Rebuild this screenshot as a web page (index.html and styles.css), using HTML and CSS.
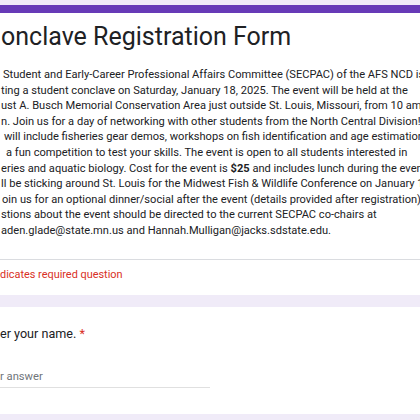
FILE: index.html
```html
<!DOCTYPE html>
<html lang="en">
<head>
<meta charset="utf-8">
<title>Conclave Registration Form</title>
<link rel="stylesheet" href="styles.css">
</head>
<body>
<div class="page">
  <div class="card header-card">
    <div class="band"></div>
    <h1 class="title">onclave Registration Form</h1>
    <div class="desc">
      <div class="line i3">Student and Early-Career Professional Affairs Committee (SECPAC) of the AFS NCD is</div>
      <div class="line">ting a student conclave on Saturday, January 18, 2025. The event will be held at the</div>
      <div class="line">ust A. Busch Memorial Conservation Area just outside St. Louis, Missouri, from 10 am</div>
      <div class="line">n. Join us for a day of networking with other students from the North Central Division!</div>
      <div class="line i4">will include fisheries gear demos, workshops on fish identification and age estimation,</div>
      <div class="line i6">a fun competition to test your skills. The event is open to all students interested in</div>
      <div class="line">eries and aquatic biology. Cost for the event is <b>$25</b> and includes lunch during the event.</div>
      <div class="line">ll be sticking around St. Louis for the Midwest Fish &amp; Wildlife Conference on January 19</div>
      <div class="line i2">oin us for an optional dinner/social after the event (details provided after registration).</div>
      <div class="line">stions about the event should be directed to the current SECPAC co-chairs at</div>
      <div class="line">aden.glade@state.mn.us and Hannah.Mulligan@jacks.sdstate.edu.</div>
    </div>
    <div class="required">dicates required question</div>
  </div>
  <div class="card question-card">
    <div class="question">er your name. <span class="star">*</span></div>
    <div class="answer">r answer</div>
  </div>
</div>
</body>
</html>
```
FILE: styles.css
```css
html, body {
  margin: 0;
  padding: 0;
}
body {
  background: #f0ebf8;
  font-family: Roboto, "Liberation Sans", Arial, sans-serif;
  color: #202124;
  overflow: hidden;
}
.page {
  padding-top: 5px;
  display: flex;
  flex-direction: column;
  gap: 12px;
}
.card {
  background: #ffffff;
  white-space: nowrap;
  overflow: hidden;
}
.band {
  height: 8px;
  background: #673ab7;
}
.title {
  margin: 0;
  padding: 9px 0 0 1px;
  font-size: 25px;
  line-height: 30px;
  font-weight: 400;
  color: #202124;
}
.desc {
  padding: 15px 0 20px 1px;
  border-bottom: 1px solid #dadce0;
  font-size: 11.1px;
  line-height: 15.6px;
  letter-spacing: 0;
}
.desc b {
  font-weight: 700;
}
.i2 { padding-left: 1px; }
.i3 { padding-left: 2px; }
.i4 { padding-left: 3px; }
.i6 { padding-left: 5px; }
.required {
  padding: 7px 0 12px 0;
  font-size: 10.9px;
  line-height: 16px;
  color: #d93025;
}
.question-card {
  padding: 18px 0 26px 0;
}
.question {
  font-size: 12.6px;
  line-height: 18px;
  color: #202124;
}
.star {
  color: #d93025;
}
.answer {
  margin-top: 26px;
  width: 210px;
  padding-bottom: 2px;
  border-bottom: 1px solid #e0e0e0;
  font-size: 11.2px;
  line-height: 16px;
  color: #70757a;
}
```
